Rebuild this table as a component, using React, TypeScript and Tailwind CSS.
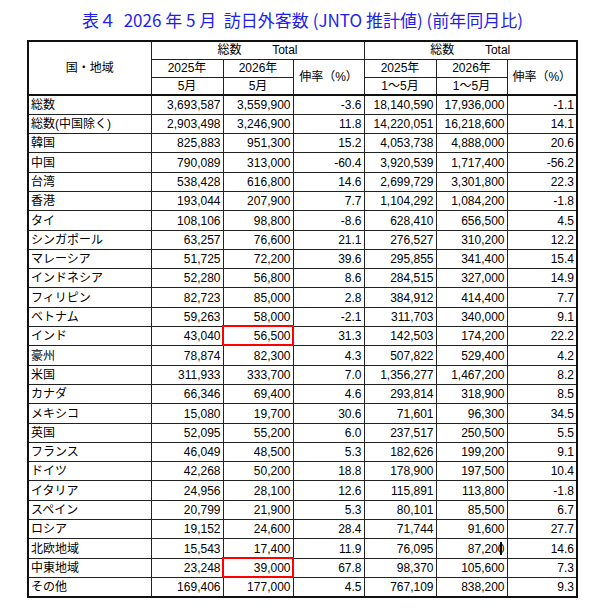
import React from 'react';

type Row = {
  name: string;
  m25: string;
  m26: string;
  mRate: string;
  c25: string;
  c26: string;
  cRate: string;
  mark?: boolean;
  cursor?: boolean;
};

const rows: Row[] = [
  { name: '総数', m25: '3,693,587', m26: '3,559,900', mRate: '-3.6', c25: '18,140,590', c26: '17,936,000', cRate: '-1.1' },
  { name: '総数(中国除く)', m25: '2,903,498', m26: '3,246,900', mRate: '11.8', c25: '14,220,051', c26: '16,218,600', cRate: '14.1' },
  { name: '韓国', m25: '825,883', m26: '951,300', mRate: '15.2', c25: '4,053,738', c26: '4,888,000', cRate: '20.6' },
  { name: '中国', m25: '790,089', m26: '313,000', mRate: '-60.4', c25: '3,920,539', c26: '1,717,400', cRate: '-56.2' },
  { name: '台湾', m25: '538,428', m26: '616,800', mRate: '14.6', c25: '2,699,729', c26: '3,301,800', cRate: '22.3' },
  { name: '香港', m25: '193,044', m26: '207,900', mRate: '7.7', c25: '1,104,292', c26: '1,084,200', cRate: '-1.8' },
  { name: 'タイ', m25: '108,106', m26: '98,800', mRate: '-8.6', c25: '628,410', c26: '656,500', cRate: '4.5' },
  { name: 'シンガポール', m25: '63,257', m26: '76,600', mRate: '21.1', c25: '276,527', c26: '310,200', cRate: '12.2' },
  { name: 'マレーシア', m25: '51,725', m26: '72,200', mRate: '39.6', c25: '295,855', c26: '341,400', cRate: '15.4' },
  { name: 'インドネシア', m25: '52,280', m26: '56,800', mRate: '8.6', c25: '284,515', c26: '327,000', cRate: '14.9' },
  { name: 'フィリピン', m25: '82,723', m26: '85,000', mRate: '2.8', c25: '384,912', c26: '414,400', cRate: '7.7' },
  { name: 'ベトナム', m25: '59,263', m26: '58,000', mRate: '-2.1', c25: '311,703', c26: '340,000', cRate: '9.1' },
  { name: 'インド', m25: '43,040', m26: '56,500', mRate: '31.3', c25: '142,503', c26: '174,200', cRate: '22.2', mark: true },
  { name: '豪州', m25: '78,874', m26: '82,300', mRate: '4.3', c25: '507,822', c26: '529,400', cRate: '4.2' },
  { name: '米国', m25: '311,933', m26: '333,700', mRate: '7.0', c25: '1,356,277', c26: '1,467,200', cRate: '8.2' },
  { name: 'カナダ', m25: '66,346', m26: '69,400', mRate: '4.6', c25: '293,814', c26: '318,900', cRate: '8.5' },
  { name: 'メキシコ', m25: '15,080', m26: '19,700', mRate: '30.6', c25: '71,601', c26: '96,300', cRate: '34.5' },
  { name: '英国', m25: '52,095', m26: '55,200', mRate: '6.0', c25: '237,517', c26: '250,500', cRate: '5.5' },
  { name: 'フランス', m25: '46,049', m26: '48,500', mRate: '5.3', c25: '182,626', c26: '199,200', cRate: '9.1' },
  { name: 'ドイツ', m25: '42,268', m26: '50,200', mRate: '18.8', c25: '178,900', c26: '197,500', cRate: '10.4' },
  { name: 'イタリア', m25: '24,956', m26: '28,100', mRate: '12.6', c25: '115,891', c26: '113,800', cRate: '-1.8' },
  { name: 'スペイン', m25: '20,799', m26: '21,900', mRate: '5.3', c25: '80,101', c26: '85,500', cRate: '6.7' },
  { name: 'ロシア', m25: '19,152', m26: '24,600', mRate: '28.4', c25: '71,744', c26: '91,600', cRate: '27.7' },
  { name: '北欧地域', m25: '15,543', m26: '17,400', mRate: '11.9', c25: '76,095', c26: '87,200', cRate: '14.6', cursor: true },
  { name: '中東地域', m25: '23,248', m26: '39,000', mRate: '67.8', c25: '98,370', c26: '105,600', cRate: '7.3', mark: true },
  { name: 'その他', m25: '169,406', m26: '177,000', mRate: '4.5', c25: '767,109', c26: '838,200', cRate: '9.3' },
];

const font = "font-['Liberation_Sans','Noto_Sans_CJK_JP',sans-serif]";
const cell = 'border border-[#222] p-0 align-bottom';
const num = `${cell} text-right pr-[2px] pb-[1px] leading-[16px]`;
const head = `${cell} text-center align-middle leading-[16px] font-normal`;

export default function App() {
  return (
    <div className={`w-[605px] h-[609px] bg-white text-black ${font}`}>
      <h1 className="pt-[8px] h-[40px] text-center text-[17px] leading-[24px] text-[#1e1ef0] font-['Noto_Sans_CJK_JP',sans-serif] whitespace-pre">
        {'表４  2026 年 5 月  訪日外客数 (JNTO 推計値) (前年同月比)'}
      </h1>
      <table className="ml-[27px] w-[549px] table-fixed border-collapse border-2 border-[#111] text-[12px]">
        <colgroup>
          <col className="w-[123px]" />
          <col className="w-[72px]" />
          <col className="w-[70px]" />
          <col className="w-[71px]" />
          <col className="w-[72px]" />
          <col className="w-[71px]" />
          <col className="w-[70px]" />
        </colgroup>
        <thead>
          <tr className="h-[18px]">
            <th rowSpan={3} className={head}>国・地域</th>
            <th colSpan={3} className={`${head} whitespace-pre`}>{'総数　　  Total'}</th>
            <th colSpan={3} className={`${head} whitespace-pre`}>{'総数　　  Total'}</th>
          </tr>
          <tr className="h-[18px]">
            <th className={head}>2025年</th>
            <th className={head}>2026年</th>
            <th rowSpan={2} className={head}>伸率（%）</th>
            <th className={head}>2025年</th>
            <th className={head}>2026年</th>
            <th rowSpan={2} className={head}>伸率（%）</th>
          </tr>
          <tr className="h-[18px]">
            <th className={head}>5月</th>
            <th className={head}>5月</th>
            <th className={head}>1～5月</th>
            <th className={head}>1～5月</th>
          </tr>
        </thead>
        <tbody className="border-t-2 border-[#111]">
          {rows.map((r) => (
            <tr key={r.name} className="h-[19.3px]">
              <td className={`${cell} text-left pl-[2px] pb-[1px] leading-[16px] whitespace-nowrap`}>{r.name}</td>
              <td className={num}>{r.m25}</td>
              <td className={`${num} relative`}>
                {r.m26}
                {r.mark && (
                  <span className="absolute z-10 -left-[2px] -top-[2px] -right-[1px] -bottom-[1px] border-[2.5px] border-[#f00]" />
                )}
              </td>
              <td className={num}>{r.mRate}</td>
              <td className={num}>{r.c25}</td>
              <td className={`${num} relative`}>
                {r.c26}
                {r.cursor && (
                  <span className="absolute z-10 left-[63px] top-[3px] h-[13px] w-[2px] bg-black" />
                )}
              </td>
              <td className={num}>{r.cRate}</td>
            </tr>
          ))}
        </tbody>
      </table>
    </div>
  );
}
